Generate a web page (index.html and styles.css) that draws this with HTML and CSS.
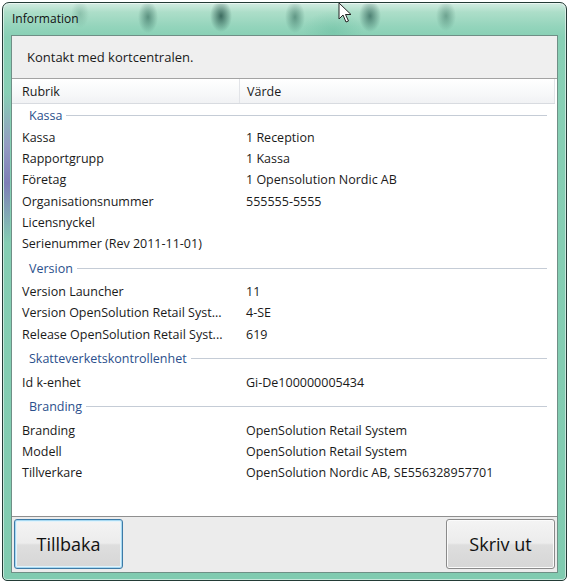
FILE: index.html
```html
<!DOCTYPE html>
<html>
<head>
<meta charset="utf-8">
<link rel="stylesheet" href="styles.css">
</head>
<body>
<div class="window">
  <div class="titlebar">Information</div>
  <svg class="cursor" width="14" height="22" viewBox="0 0 14 22"><path d="M1 1 L1 17 L5 13 L8 20 L10.5 19 L7.5 12.5 L13 12.5 Z" fill="#fff" stroke="#222" stroke-width="1"/></svg>
  <div class="panel">
    <div class="message">Kontakt med kortcentralen.</div>
    <div class="list">
      <div class="header"><div class="hcol">Rubrik</div><div class="hcol hval">Värde</div></div>
      <div class="group first"><span>Kassa</span><i></i></div>
      <div class="row"><span>Kassa</span><span>1 Reception</span></div>
      <div class="row"><span>Rapportgrupp</span><span>1 Kassa</span></div>
      <div class="row"><span>Företag</span><span>1 Opensolution Nordic AB</span></div>
      <div class="row"><span>Organisationsnummer</span><span>555555-5555</span></div>
      <div class="row"><span>Licensnyckel</span><span></span></div>
      <div class="row"><span>Serienummer (Rev 2011-11-01)</span><span></span></div>
      <div class="group"><span>Version</span><i></i></div>
      <div class="row"><span>Version Launcher</span><span>11</span></div>
      <div class="row"><span>Version OpenSolution Retail Syst...</span><span>4-SE</span></div>
      <div class="row"><span>Release OpenSolution Retail Syst...</span><span>619</span></div>
      <div class="group"><span>Skatteverketskontrollenhet</span><i></i></div>
      <div class="row"><span>Id k-enhet</span><span>Gi-De100000005434</span></div>
      <div class="group"><span>Branding</span><i></i></div>
      <div class="row"><span>Branding</span><span>OpenSolution Retail System</span></div>
      <div class="row"><span>Modell</span><span>OpenSolution Retail System</span></div>
      <div class="row"><span>Tillverkare</span><span>OpenSolution Nordic AB, SE556328957701</span></div>
    </div>
    <div class="buttons">
      <button class="btn focus">Tillbaka</button>
      <button class="btn">Skriv ut</button>
    </div>
  </div>
</div>
</body>
</html>
```

FILE: styles.css
```css
html, body {
  margin: 0;
  padding: 0;
  background: #ffffff;
}
body {
  width: 568px;
  height: 583px;
  font-family: "Open Sans", "Noto Sans", sans-serif;
  color: #1a1a1a;
}
.window {
  position: relative;
  box-sizing: border-box;
  margin: 2px 0 0 2px;
  width: 565px;
  height: 579px;
  border: 1px solid #233b36;
  border-radius: 7px 7px 5px 5px;
  padding: 0 8px 7px 8px;
  display: flex;
  flex-direction: column;
  background:
    radial-gradient(ellipse 10px 16px at 145px 14px, rgba(30,85,72,0.55), rgba(30,85,72,0) 100%),
    radial-gradient(ellipse 11px 16px at 218px 13px, rgba(15,60,52,0.7), rgba(15,60,52,0) 100%),
    radial-gradient(ellipse 10px 16px at 292px 14px, rgba(30,85,72,0.5), rgba(30,85,72,0) 100%),
    radial-gradient(ellipse 11px 16px at 367px 13px, rgba(20,70,62,0.6), rgba(20,70,62,0) 100%),
    radial-gradient(ellipse 10px 15px at 443px 13px, rgba(40,95,80,0.45), rgba(40,95,80,0) 100%),
    radial-gradient(ellipse 9px 14px at 77px 11px, rgba(70,130,110,0.3), rgba(70,130,110,0) 100%),
    radial-gradient(ellipse 30px 20px at 330px 28px, rgba(90,180,150,0.35), rgba(90,180,150,0) 100%),
    linear-gradient(180deg, #d3ece2 0px, #addec9 9px, #93d4bb 24px, #88d0b5 34px, #80cbb0 100%);
  box-shadow: inset 0 0 0 1px rgba(255,255,255,0.55);
}
.window::before {
  content: "";
  position: absolute;
  left: 1px;
  top: 90px;
  width: 6px;
  height: 150px;
  background: linear-gradient(180deg, rgba(140,110,190,0) 0%, #9a86c8 35%, #7a5cb8 60%, rgba(122,92,184,0) 100%);
  opacity: 0.7;
}
.titlebar {
  height: 32px;
  line-height: 32px;
  padding-left: 1px;
  font-size: 12px;
  color: #111;
  flex: none;
}
.cursor {
  position: absolute;
  left: 335px;
  top: -1px;
}
.panel {
  flex: 1;
  min-height: 0;
  display: flex;
  flex-direction: column;
  background: #ececec;
  border: 1px solid #6f8f86;
}
.message {
  flex: none;
  height: 42px;
  line-height: 42px;
  padding-left: 15px;
  font-size: 13px;
  background: #efefef;
  border-bottom: 1px solid #a3a3a3;
}
.list {
  flex: 1;
  min-height: 0;
  background: #ffffff;
  border-bottom: 1px solid #8f8f8f;
  font-size: 12.5px;
}
.header {
  display: flex;
  height: 24px;
  line-height: 25px;
  background: linear-gradient(180deg, #ffffff 0%, #f7f8f9 60%, #f1f2f4 100%);
  border-bottom: 1px solid #d8dbe0;
  margin-right: 2px;
}
.hcol {
  width: 217px;
  padding-left: 10px;
  border-right: 1px solid #e2e4e8;
}
.hcol.hval {
  flex: 1;
  width: auto;
  padding-left: 7px;
}
.group {
  display: flex;
  align-items: center;
  height: 27px;
  padding: 1px 10px 0 17px;
  box-sizing: border-box;
  color: #2b4f8c;
}
.group.first {
  height: 23px;
  padding-top: 0;
}
.group i {
  flex: 1;
  height: 1px;
  margin-left: 4px;
  background: #c5ccd6;
}
.row {
  display: grid;
  grid-template-columns: 224px 1fr;
  height: 21.2px;
  line-height: 21px;
  padding-left: 10px;
  white-space: nowrap;
}
.buttons {
  flex: none;
  display: flex;
  justify-content: space-between;
  padding: 2px 2px 3px 2px;
}
.btn {
  width: 109px;
  height: 50px;
  font-family: "Open Sans", "Noto Sans", sans-serif;
  font-size: 18px;
  color: #111;
  border: 1px solid #8a8a8a;
  border-radius: 3px;
  background: linear-gradient(180deg, #f4f4f4 0%, #ececec 48%, #dedede 52%, #d6d6d6 100%);
  box-shadow: inset 0 0 0 1px #fbfbfb;
  padding: 0;
}
.btn.focus {
  border-color: #3d7aa6;
  box-shadow: inset 0 0 0 1px #a6d8f1, inset 0 0 0 2px #e2f3fb;
}
```
